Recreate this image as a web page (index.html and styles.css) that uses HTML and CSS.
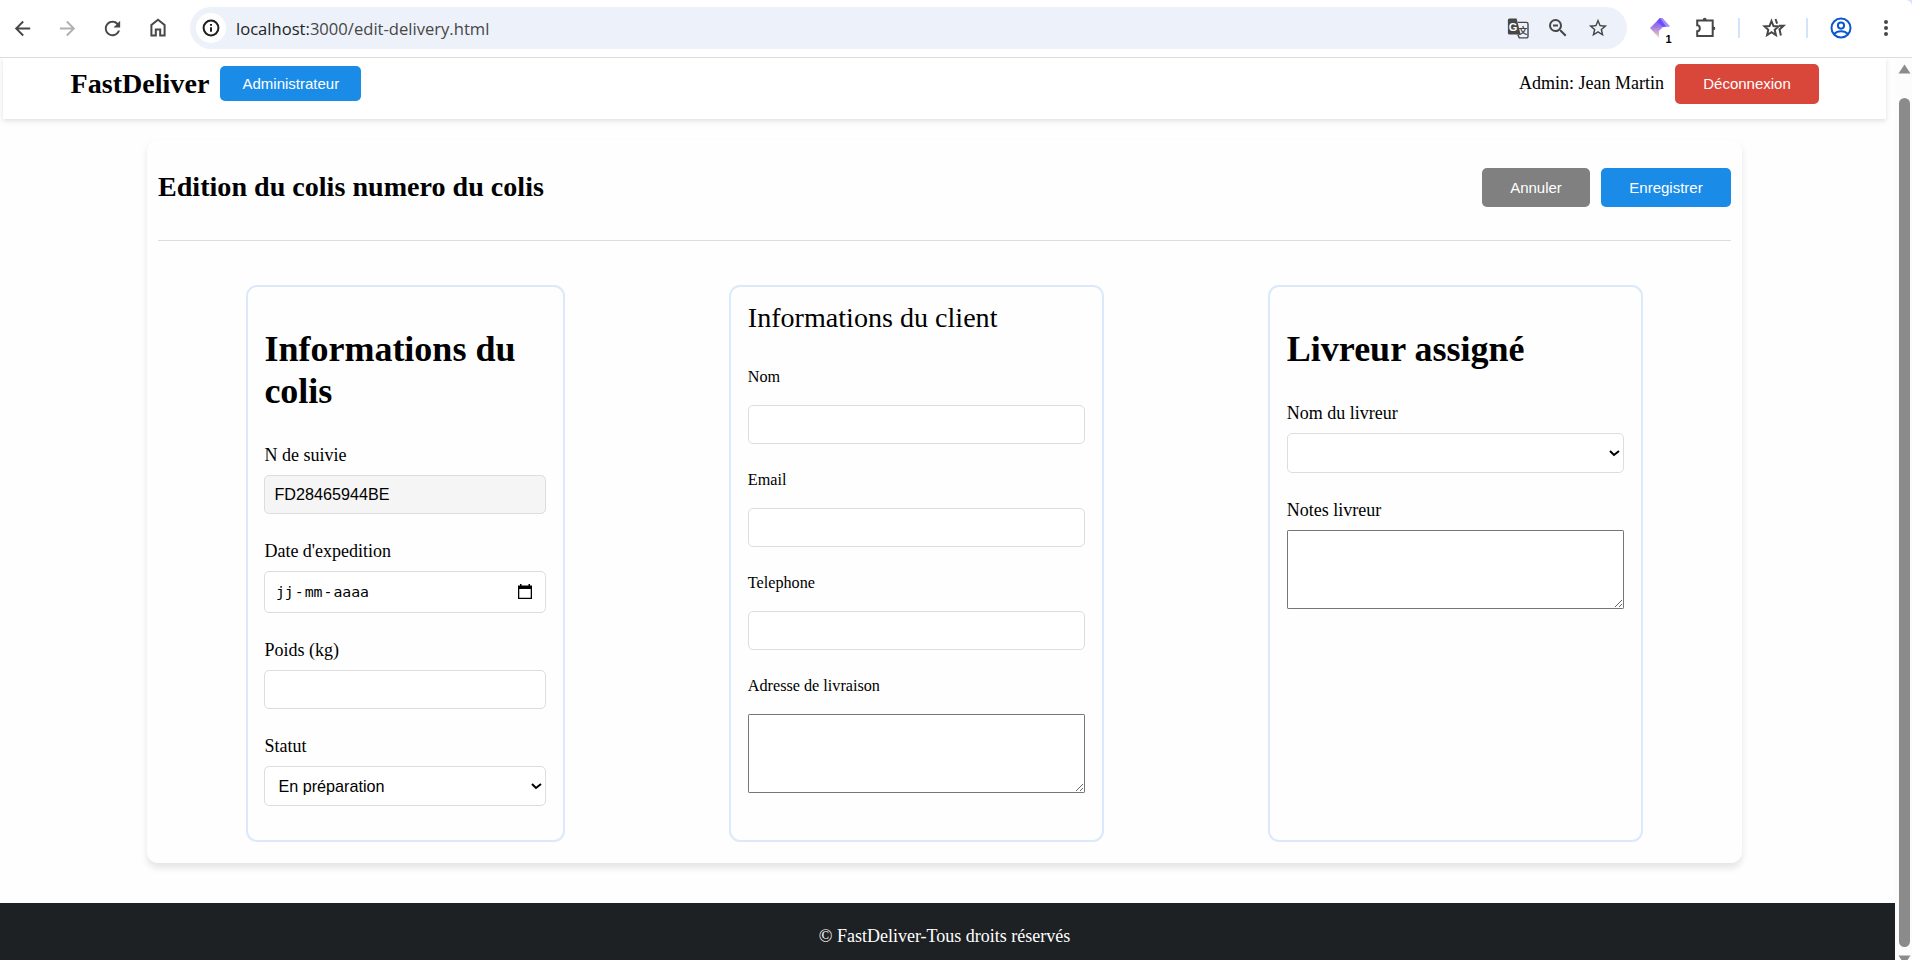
FILE: index.html
```
<!DOCTYPE html>
<html lang="fr">
<head>
    <meta charset="UTF-8">
    <meta name="viewport" content="width=device-width, initial-scale=1.0">
    <title>FastDeliver</title>
    <link rel="stylesheet" href="styles.css">
</head>
<body>
    <div class="toolbar">
        <svg class="icon" viewBox="0 0 24 24"><path d="M20 11H7.83l5.59-5.59L12 4l-8 8 8 8 1.41-1.41L7.83 13H20v-2z"/></svg>
        <svg class="icon disabled" viewBox="0 0 24 24"><path d="M4 11h12.17l-5.59-5.59L12 4l8 8-8 8-1.41-1.41L16.17 13H4v-2z"/></svg>
        <svg class="icon" viewBox="0 0 24 24"><path d="M17.65 6.35C16.2 4.9 14.21 4 12 4c-4.42 0-7.99 3.58-7.99 8s3.57 8 7.99 8c3.73 0 6.84-2.55 7.73-6h-2.08c-.82 2.33-3.04 4-5.65 4-3.31 0-6-2.69-6-6s2.69-6 6-6c1.66 0 3.14.69 4.22 1.78L13 11h7V4l-2.35 2.35z"/></svg>
        <svg class="icon line" viewBox="0 0 24 24"><path d="M5.4 19.6V9L12 3.8 18.6 9v10.6h-4.4v-6.2H9.8v6.2z"/></svg>

        <div class="address">
            <span class="info">
                <svg class="icon line dark" viewBox="0 0 24 24"><circle cx="12" cy="12" r="7.4"/><path d="M12 11.2v4.6M12 8v1.8"/></svg>
            </span>
            <span class="url"><b>localhost:</b>3000/edit-delivery.html</span>
            <svg class="icon" viewBox="0 0 24 24">
                <path d="M3.4 2.4h7.2l4 16H3.400a1.500 1.500 0 0 1-1.500-1.500v-13A1.500 1.500 0 0 1 3.400 2.400z"/>
                <path d="M11.800 6.400h8.700a1.500 1.500 0 0 1 1.500 1.500v12.500a1.500 1.500 0 0 1-1.500 1.500h-7.200l-1.600-3.400" fill="none" stroke="#474747" stroke-width="1.400"/>
                <text class="tr-g" x="2.8" y="14.5">G</text>
                <text class="tr-c" x="12.4" y="18.4">文</text>
            </svg>
            <svg class="icon" viewBox="0 0 24 24"><path d="M15.5 14h-.79l-.28-.27A6.47 6.47 0 0 0 16 9.500 6.500 6.500 0 1 0 9.500 16c1.610 0 3.090-.59 4.230-1.570l.27.28v.79l5 4.990L20.490 19l-4.990-5zm-6 0C7.010 14 5 11.990 5 9.500S7.010 5 9.500 5 14 7.010 14 9.500 11.990 14 9.500 14zM7 8.600h5v1.800H7z"/></svg>
            <svg class="icon star" viewBox="0 0 24 24"><path d="M22 9.24l-7.19-.62L12 2 9.19 8.63 2 9.24l5.46 4.73L5.82 21 12 17.27 18.18 21l-1.63-7.03L22 9.24zM12 15.4l-3.76 2.27 1-4.28-3.32-2.88 4.38-.38L12 6.1l1.71 4.04 4.38.38-3.32 2.88 1 4.28L12 15.4z"/></svg>
        </div>

        <svg class="icon" viewBox="0 0 24 24">
            <defs>
                <linearGradient id="ext" x1="0" y1="0" x2="0" y2="1">
                    <stop offset="0" stop-color="#6a4dff"/>
                    <stop offset=".45" stop-color="#a07be6"/>
                    <stop offset="1" stop-color="#ffd9b8"/>
                </linearGradient>
            </defs>
            <path d="M12 2L2 12l9 10v-7l4-4 2-.5 4.5-.5L14 2z" fill="url(#ext)"/>
            <path d="M14 2l8 8.500-4.500.5-8-6.500L12 2z" fill="#a78bfa"/>
            <path d="M12 2l6 8.500-3 .5-6-5.500z" fill="#6c4cff"/>
            <text class="badge" x="17.5" y="26.500">1</text>
        </svg>
        <svg class="icon line" viewBox="0 0 24 24"><path d="M4.200 4.600h15.500v15.500H4.200v-4.800c3.500 0 3.500-6 0-6z"/><path d="M9.800 4.400v-.7a1.900 1.900 0 0 1 3.800 0v.7zM19.900 10.400h.5a1.900 1.900 0 0 1 0 3.800h-.5z" fill="#474747" stroke="none"/></svg>
        <span class="separator"></span>
        <svg class="icon line" viewBox="0 0 24 24"><path d="M10.500 5l2 5 5 .4-3.800 3.400 1.200 5.200-4.400-2.800L6.100 19l1.200-5.200-3.800-3.400 5-.4zM14.500 3l1.600 4.600M18 9.800h4.500l-4 3.600 1.400 6"/></svg>
        <span class="separator"></span>
        <svg class="icon line profile" viewBox="0 0 24 24"><circle cx="12" cy="12" r="9.500"/><circle cx="12" cy="9.600" r="3.100"/><path d="M5.200 18c3.300-3.600 10.300-3.600 13.600 0"/></svg>
        <svg class="icon" viewBox="0 0 24 24"><circle cx="12" cy="6" r="2"/><circle cx="12" cy="12" r="2"/><circle cx="12" cy="18" r="2"/></svg>
    </div>

    <div class="window">
        <div class="page">
            <header class="header">
                <div class="header-side">
                    <span class="logo">FastDeliver</span>
                    <button class="role">Administrateur</button>
                </div>
                <div class="header-side">
                    <span class="admin">Admin: Jean Martin</span>
                    <button class="logout">Déconnexion</button>
                </div>
            </header>

            <main class="container">
                <div class="title-bar">
                    <h2>Edition du colis numero du colis</h2>
                    <div class="actions">
                        <button class="cancel">Annuler</button>
                        <button class="save">Enregistrer</button>
                    </div>
                </div>

                <div class="cards">
                    <section class="card card-colis">
                        <h1>Informations du colis</h1>
                        <div class="form-group">
                            <label>N de suivie</label>
                            <input type="text" class="readonly" value="FD28465944BE" readonly>
                        </div>
                        <div class="form-group">
                            <label>Date d'expedition</label>
                            <div class="date">
                                <span>jj</span>-<span>mm</span>-<span>aaaa</span>
                                <svg class="calendar" viewBox="0 0 14 15"><path d="M2 0h1.500v1.500h7V0H12v1.500h2V15H0V1.500h2zM1.300 5v8.700h11.400V5z" fill-rule="evenodd"/></svg>
                            </div>
                        </div>
                        <div class="form-group">
                            <label>Poids (kg)</label>
                            <input type="text">
                        </div>
                        <div class="form-group">
                            <label>Statut</label>
                            <select><option>En préparation</option></select>
                        </div>
                    </section>

                    <section class="card card-client">
                        <div class="card-title">Informations du client</div>
                        <div class="form-group">
                            <label>Nom</label>
                            <input type="text">
                        </div>
                        <div class="form-group">
                            <label>Email</label>
                            <input type="email">
                        </div>
                        <div class="form-group">
                            <label>Telephone</label>
                            <input type="tel">
                        </div>
                        <div class="form-group">
                            <label>Adresse de livraison</label>
                            <textarea></textarea>
                        </div>
                    </section>

                    <section class="card card-livreur">
                        <h1>Livreur assigné</h1>
                        <div class="form-group">
                            <label>Nom du livreur</label>
                            <select><option></option></select>
                        </div>
                        <div class="form-group">
                            <label>Notes livreur</label>
                            <textarea></textarea>
                        </div>
                    </section>
                </div>
            </main>

            <footer class="footer">© FastDeliver-Tous droits réservés</footer>
        </div>

        <div class="scrollbar">
            <svg class="arrow" viewBox="0 0 13 10"><path d="M6.500 0.500L12.500 9.500H0.500z"/></svg>
            <div class="thumb"></div>
            <svg class="arrow" viewBox="0 0 13 10"><path d="M0.500 0.500h12L6.500 9.500z"/></svg>
        </div>
    </div>
</body>
</html>
```

FILE: styles.css
```
* {
    box-sizing: border-box;
}

body {
    margin: 0;
    height: 960px;
    overflow: hidden;
    font-family: "Liberation Serif", "Times New Roman", serif;
    font-size: 18px;
    color: #000;
    background-color: #d3e3fd;
    display: flex;
    flex-direction: column;
}

/* Barre du navigateur */
.toolbar {
    display: flex;
    align-items: center;
    gap: 21px;
    height: 58px;
    flex: none;
    padding: 0 14px 1px 11px;
    background: #fff;
    border-bottom: 1px solid #dcdcdc;
    border-top-right-radius: 6px;
}

.icon {
    width: 24px;
    height: 24px;
    flex: none;
    fill: #474747;
    overflow: visible;
}

.toolbar > .icon:nth-child(-n+3) {
    width: 23px;
    height: 23px;
    margin-right: 1px;
}

.icon.disabled {
    fill: #b0b0b0;
}

.icon.line {
    fill: none;
    stroke: #474747;
    stroke-width: 2;
}

.icon.dark {
    stroke: #1f1f1f;
}

.icon.profile {
    stroke: #0b57d0;
}

.icon.star {
    padding: 1px;
}

.badge {
    font: bold 11px "Liberation Sans", Arial, sans-serif;
    fill: #000;
}

.tr-g {
    font: bold 11px "Liberation Sans", Arial, sans-serif;
    fill: #fff;
}

.tr-c {
    font: bold 9px "Noto Sans CJK SC", sans-serif;
}

.address {
    flex: 1;
    display: flex;
    align-items: center;
    gap: 16px;
    height: 42px;
    margin-left: -1px;
    padding: 0 17px 0 6px;
    border-radius: 21px;
    background: #ecf1fa;
}

.info {
    display: flex;
    align-items: center;
    justify-content: center;
    width: 30px;
    height: 30px;
    border-radius: 50%;
    background: #fff;
}

.url {
    flex: 1;
    margin-left: -6px;
    font: 16.6px "Open Sans", "Segoe UI", sans-serif;
    color: #474747;
}

.url b {
    font-weight: normal;
    color: #1f1f1f;
}

.separator {
    width: 2px;
    height: 20px;
    background: #d3e3fd;
}

/* Page */
.window {
    flex: 1;
    min-height: 0;
    display: flex;
    background: #fefefe;
}

.page {
    flex: 1;
    display: flex;
    flex-direction: column;
}

.header {
    display: flex;
    justify-content: space-between;
    align-items: center;
    height: 61px;
    margin: 0 9px 0 3px;
    padding: 0 67px 9px 68px;
    background: #fff;
    box-shadow: 0 2px 5px rgba(0, 0, 0, 0.12);
    clip-path: inset(0 -10px -10px -10px);
}

.header-side {
    display: flex;
    align-items: center;
    gap: 11px;
}

.logo {
    padding-bottom: 1px;
    margin-left: -0.5px;
    font-size: 28.1px;
    font-weight: bold;
}

.admin {
    padding-bottom: 2px;
}

button {
    border: none;
    border-radius: 5px;
    padding: 0 0 1px;
    height: 39px;
    color: white;
    background-color: #1a8ce8;
    font-family: "Liberation Sans", Arial, sans-serif;
    font-size: 15px;
    cursor: pointer;
}

.role {
    width: 141px;
    height: 35px;
    margin-bottom: 1px;
}

.logout {
    width: 144px;
    height: 40px;
    background-color: #d9463a;
}

.cancel {
    width: 108px;
    background-color: #808080;
}

.save {
    width: 130px;
}

.container {
    width: 1595px;
    height: 723px;
    margin: 21px 0 0 147px;
    padding: 0 11px;
    border-radius: 11px;
    background: #fefefe;
    box-shadow: 0 4.5px 7px rgba(0, 0, 0, 0.1);
}

.title-bar {
    display: flex;
    justify-content: space-between;
    align-items: center;
    height: 101px;
    padding-bottom: 5px;
    border-bottom: 1px solid #dcdddd;
}

.title-bar h2 {
    margin: 0;
    padding-bottom: 2px;
    font-size: 28.1px;
}

.actions {
    display: flex;
    gap: 11px;
}

.cards {
    display: flex;
    justify-content: space-between;
    margin-top: 44px;
    padding: 0 88px;
}

.card {
    width: 375px;
    height: 557px;
    padding: 16px 16.8px;
    border: 2px solid #dbe9fa;
    border-radius: 11px;
}

.card-colis {
    width: 319px;
    padding-left: 16.4px;
}

.card h1 {
    margin: 25px 0 33px;
    font-size: 36px;
    line-height: 42px;
}

.card-title {
    margin-bottom: 35px;
    font-size: 28.1px;
    line-height: 30px;
}

.form-group {
    display: flex;
    flex-direction: column;
    gap: 9px;
    margin-bottom: 27.3px;
}

.form-group label {
    line-height: 21px;
}

.card-client .form-group {
    gap: 18.3px;
    margin-bottom: 27px;
}

.card-client label {
    font-size: 16.2px;
    line-height: 19px;
}

input,
.date {
    width: 100%;
    height: 38.7px;
    margin: 0;
    padding: 0 9px;
    border: 1px solid #ddd;
    border-radius: 5px;
    background-color: #fff;
    color: #000;
    font-family: "Liberation Sans", Arial, sans-serif;
    font-size: 16.2px;
}

input.readonly {
    background-color: #f5f5f5;
}

select {
    zoom: 1.125;
    width: 100%;
    height: 35.2px;
    padding: 0 8px;
    border: 1px solid #ddd;
    border-radius: 4.5px;
    background-color: #fff;
    color: #000;
    font-family: "Liberation Sans", Arial, sans-serif;
    font-size: 14.4px;
}

.date {
    display: flex;
    align-items: center;
    height: 42px;
    padding: 0 9.5px;
    font-family: "DejaVu Sans Mono", Consolas, monospace;
    font-size: 14.8px;
}

.date span {
    padding: 0 1px;
}

.calendar {
    width: 14px;
    height: 15px;
    margin: 0 4px 0 auto;
}

textarea {
    zoom: 1.125;
    width: 100%;
    height: 70px;
    margin: 0;
    border: 1px solid #767676;
    border-radius: 1px;
}

.footer {
    flex: 1;
    margin-top: 40px;
    padding: 23px 6px 0 0;
    line-height: 21px;
    text-align: center;
    color: #fff;
    background-color: #1d2124;
}

.scrollbar {
    display: flex;
    flex-direction: column;
    align-items: center;
    width: 17px;
    padding: 6px 0 0 2px;
    background: #fcfcfc;
}

.arrow {
    width: 13px;
    height: 10px;
    flex: none;
    fill: #8b8b8b;
}

.thumb {
    width: 11px;
    height: 849px;
    margin: 24px 0 8px;
    flex: none;
    border-radius: 6px;
    background: #8b8b8b;
}
```
